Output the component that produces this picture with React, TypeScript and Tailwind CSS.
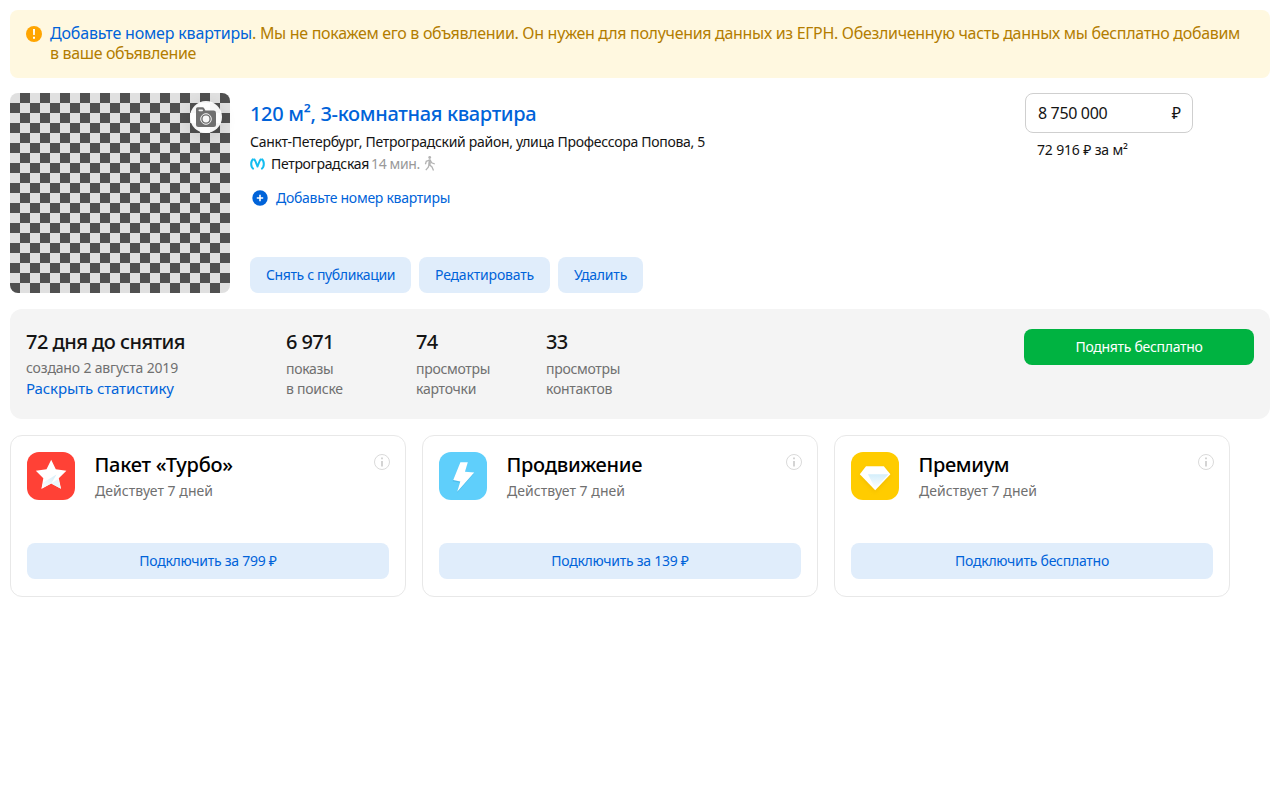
import React from 'react';

function TurboIcon() {
  return (
    <svg width="48" height="48" viewBox="0 0 48 48" className="shrink-0">
      <defs>
        <linearGradient id="starShade" x1="0" y1="1" x2="1" y2="0">
          <stop offset="0" stopColor="#fff" />
          <stop offset="1" stopColor="#d3edf8" />
        </linearGradient>
      </defs>
      <rect width="48" height="48" rx="12" fill="#ff4136" />
      <path d="M24.2 7.7 28.8 17.3 39.4 18.8 31.8 26.2 34 36.8 24.2 31.6 14.5 36.8 16.3 26.2 8.8 18.8 19.5 17.3Z" fill="#fff" />
      <path d="M24.2 31.6 29.5 22.5 16.3 30.5 14.5 36.8Z" fill="url(#starShade)" />
      <path d="M24.2 31.6 31.2 27 34 36.8Z" fill="#e9f7fc" />
    </svg>
  );
}

function PromoIcon() {
  return (
    <svg width="48" height="48" viewBox="0 0 48 48" className="shrink-0">
      <rect width="48" height="48" rx="12" fill="#5fcffb" />
      <path d="M21.7 11 28.6 11 26.3 20.3 35.4 20.9 18.6 40.2 21.7 30 14.3 28.5Z" fill="#2e9fd0" opacity=".35" transform="translate(-.6 .8)" />
      <path d="M21.4 10.2H28.8L26 19.7 35.2 20.5 18.2 39.8 21.3 29.5 14.2 28Z" fill="#fff" />
    </svg>
  );
}

function PremiumIcon() {
  return (
    <svg width="48" height="48" viewBox="0 0 48 48" className="shrink-0">
      <defs>
        <linearGradient id="gem" x1="0" y1="0" x2="0" y2="1">
          <stop offset="0" stopColor="#d3eefb" />
          <stop offset="1" stopColor="#fff" />
        </linearGradient>
        <filter id="gemShadow" x="-30%" y="-30%" width="160%" height="160%">
          <feGaussianBlur stdDeviation="2" />
        </filter>
      </defs>
      <rect width="48" height="48" rx="12" fill="#ffcc00" />
      <path d="M15 16H32.7L39.3 24 24 40 9 24Z" fill="#d49a00" opacity=".3" filter="url(#gemShadow)" />
      <path d="M15 14.2H32.8L39.4 22.3 24.2 38.2 8.8 22.3Z" fill="#fff" />
      <path d="M17 22.2H37.5L24.2 36.5Z" fill="url(#gem)" />
    </svg>
  );
}

function InfoIcon() {
  return (
    <svg width="16" height="16" viewBox="0 0 16 16" className="mt-0.5 -mr-px ml-auto shrink-0">
      <circle cx="8" cy="8" r="7.5" fill="none" stroke="#dadada" />
      <path d="M7.1 7h1.8v5.5H7.1zM7.1 3.4h1.8v1.8H7.1z" fill="#d0d0d0" />
    </svg>
  );
}

function Photo() {
  return (
    <div className="flex h-[200px] w-[220px] shrink-0 items-start justify-end rounded-lg bg-[conic-gradient(#505050_25%,#e0e0e0_0_50%,#505050_0_75%,#e0e0e0_0)] bg-[length:20px_20px] p-2">
      <div className="flex size-8 items-center justify-center rounded-full bg-white/95 shadow-[0_4px_16px_rgba(0,0,0,0.12)]">
        <svg width="32" height="32" viewBox="0 0 32 32">
          <path d="M6 9V7.8Q6 6.2 7.6 6.2H12.5Q13.7 6.2 14.3 7.4L15.4 9.6H23.5Q26 9.6 26 12V23.5Q26 26 23.5 26H8.5Q6 26 6 23.5Z" fill="#707070" />
          <rect x="8.5" y="8.6" width="4.5" height="1.6" rx=".8" fill="#f2f2f2" />
          <circle cx="16" cy="18" r="5.3" fill="#707070" stroke="#f5f5f5" strokeWidth="1" />
          <circle cx="16" cy="18" r="3.4" fill="#f8f8f8" />
        </svg>
      </div>
    </div>
  );
}

function MetroIcon() {
  return (
    <svg width="15" height="12" viewBox="0 0 15 12" className="mr-1.5 shrink-0">
      <g fill="none" stroke="#14bdf0" strokeLinejoin="round">
        <path d="M3.7 11.1C.4 9 .3 3 3.6.9" strokeWidth="2" />
        <path d="M11.3 11.1C14.6 9 14.7 3 11.4.9" strokeWidth="2" />
        <path d="M4 .9C5.4 2.6 6.3 5.3 7.5 8.6 8.7 5.3 9.6 2.6 11 .9" strokeWidth="1.9" />
      </g>
    </svg>
  );
}

function WalkIcon() {
  return (
    <svg width="12" height="15" viewBox="0 0 12 15" className="ml-1 shrink-0 -translate-y-px">
      <circle cx="5.7" cy="1.5" r="1.4" fill="#b3b3b3" />
      <g fill="none" stroke="#b3b3b3" strokeWidth="1.3">
        <path d="M5.9 3.7 5.2 8.5 8 11 9.5 14.4M5.1 8.5 4.3 11.2 1.8 14.2" />
        <path d="M5.6 4 2.3 5.3 1.4 8.3M6.3 4.2 7.7 6.8 10.8 8" />
      </g>
      <path d="M4.7 3.5 6.9 3.5 6.7 8.7 4.3 8.7Z" fill="#b3b3b3" />
    </svg>
  );
}

function Stat({ value, lines }: { value: string; lines: string[] }) {
  return (
    <div className="w-[130px]">
      <div className="text-xl/[26px] font-medium tracking-[-0.6px]">{value}</div>
      {lines.map((line, i) => (
        <div key={line} className={i === 0 ? 'mt-1 text-sm/5 tracking-[-0.3px] text-[#707070]' : 'text-sm/5 tracking-[-0.25px] text-[#707070]'}>
          {line}
        </div>
      ))}
    </div>
  );
}

function Service({ icon, title, titleClass, action }: { icon: React.ReactNode; title: string; titleClass: string; action: string }) {
  return (
    <div className="flex h-[162px] w-[396px] flex-col justify-between rounded-xl border border-[#e8e8e8] px-4 pt-4 pb-[17px]">
      <div className="flex">
        {icon}
        <div className="ml-5">
          <div className={titleClass}>{title}</div>
          <div className="text-sm/[26px] tracking-[0.04px] text-[#707070]">Действует 7 дней</div>
        </div>
        <InfoIcon />
      </div>
      <button className="h-9 rounded-lg bg-[#e0edfb] text-sm tracking-[-0.26px] text-[#0063d9]">{action}</button>
    </div>
  );
}

export default function App() {
  return (
    <main className="p-2.5 font-['Noto_Sans',sans-serif] text-[#141414]">
      <section className="flex h-[68px] rounded-lg bg-[#fff8e0] pt-[13px] pl-4">
        <svg width="16" height="16" viewBox="0 0 16 16" className="mt-[3px] mr-2 shrink-0">
          <circle cx="8" cy="8" r="8" fill="#ffa500" />
          <path d="M7 3h2l-.2 6H7.2zM7 10.8h2v1.9H7z" fill="#fff" />
        </svg>
        <p className="text-base/5 whitespace-nowrap text-[#b37d00]">
          <a className="tracking-[-0.18px] text-[#0063d9]">Добавьте номер квартиры</a>
          <span className="tracking-[-0.308px]">. Мы не покажем его в объявлении. Он нужен для получения данных из ЕГРН. Обезличенную часть данных мы бесплатно добавим</span>
          <br />
          <span className="tracking-[-0.35px]">в ваше объявление</span>
        </p>
      </section>

      <section className="mt-[15px] flex">
        <Photo />
        <div className="ml-5 flex flex-col">
          <h1 className="mt-2 text-xl/[26px] font-medium tracking-[-0.33px] text-[#0063d9]">120 м², 3-комнатная квартира</h1>
          <p className="mt-1 text-sm/[22px] tracking-[-0.295px]">Санкт-Петербург, Петроградский район, улица Профессора Попова, 5</p>
          <div className="flex items-center text-sm/[22px]">
            <MetroIcon />
            <span className="tracking-[-0.31px]">Петроградская</span>
            <span className="ml-[2px] tracking-[-0.35px] text-[#999]">14 мин.</span>
            <WalkIcon />
          </div>
          <a className="mt-3 flex items-center text-sm/[22px] tracking-[-0.28px] text-[#0063d9]">
            <svg width="16" height="16" viewBox="0 0 16 16" className="mr-2 ml-0.5">
              <circle cx="8" cy="8" r="7.7" fill="#0063d9" />
              <path d="M8 4.8v6.4M4.8 8h6.4" stroke="#fff" strokeWidth="1.6" />
            </svg>
            Добавьте номер квартиры
          </a>
          <div className="mt-auto flex gap-2 text-sm text-[#0063d9]">
            <button className="h-9 w-[161px] rounded-lg bg-[#e0edfb] tracking-[-0.36px]">Снять с публикации</button>
            <button className="h-9 w-[131px] rounded-lg bg-[#e0edfb] tracking-[-0.18px]">Редактировать</button>
            <button className="h-9 w-[85px] rounded-lg bg-[#e0edfb] tracking-[-0.2px]">Удалить</button>
          </div>
        </div>
        <div className="mr-[77px] ml-auto w-[168px]">
          <div className="flex h-10 items-center justify-between rounded-lg border border-[#cfcfcf] pr-[11px] pb-px pl-3 text-base">
            <span className="tracking-[-0.35px]">8 750 000</span>
            <span className="pt-px">₽</span>
          </div>
          <p className="mt-1.5 ml-3 text-sm/[22px] tracking-[-0.16px]">72 916 ₽ за м²</p>
        </div>
      </section>

      <section className="mt-4 flex h-[110px] rounded-xl bg-[#f4f4f4] px-4 pt-5">
        <div className="w-[260px]">
          <div className="text-xl/[26px] font-medium tracking-[-0.54px]">72 дня до снятия</div>
          <div className="mt-[3px] text-sm/5 tracking-[-0.17px] text-[#707070]">создано 2 августа 2019</div>
          <a className="block text-[15px]/[21px] tracking-[-0.12px] text-[#0063d9]">Раскрыть статистику</a>
        </div>
        <Stat value="6 971" lines={['показы', 'в поиске']} />
        <Stat value="74" lines={['просмотры', 'карточки']} />
        <Stat value="33" lines={['просмотры', 'контактов']} />
        <button className="ml-auto h-9 w-[230px] rounded-lg bg-[#00b341] text-sm tracking-[-0.3px] text-white">Поднять бесплатно</button>
      </section>

      <section className="mt-4 flex gap-4 text-black">
        <Service icon={<TurboIcon />} title="Пакет «Турбо»" titleClass="text-xl/[26px] font-medium tracking-[-0.25px] -translate-x-[0.5px]" action="Подключить за 799 ₽" />
        <Service icon={<PromoIcon />} title="Продвижение" titleClass="text-xl/[26px] font-medium tracking-[-0.27px] -translate-x-[0.5px]" action="Подключить за 139 ₽" />
        <Service icon={<PremiumIcon />} title="Премиум" titleClass="text-xl/[26px] font-medium tracking-[-0.35px] -translate-x-[0.5px]" action="Подключить бесплатно" />
      </section>
    </main>
  );
}
